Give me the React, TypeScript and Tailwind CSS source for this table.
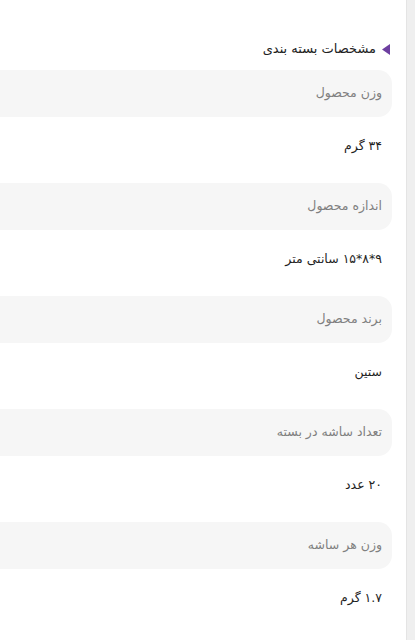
import React from 'react';

const specs = [
  { label: 'وزن محصول', value: '۳۴ گرم' },
  { label: 'اندازه محصول', value: '۹*۸*۱۵ سانتی متر' },
  { label: 'برند محصول', value: 'ستین' },
  { label: 'تعداد ساشه در بسته', value: '۲۰ عدد' },
  { label: 'وزن هر ساشه', value: '۱.۷ گرم' },
];

export default function App() {
  return (
    <div className="flex h-[640px] w-[415px] overflow-hidden bg-white font-['DejaVu_Sans',sans-serif]">
      <div dir="rtl" className="flex flex-1 flex-col pr-[14px]">
        <div className="flex h-[70px] items-center gap-[6px] pr-[2px] pt-[36px] pb-[8px]">
          <svg width="8" height="11" viewBox="0 0 8 11">
            <polygon points="8,0 8,11 0,5.5" fill="#6d3fa0" />
          </svg>
          <h3 className="text-[13px] text-[#222]">مشخصات بسته بندی</h3>
        </div>
        {specs.map((s) => (
          <div key={s.label} className="flex flex-col">
            <div className="flex h-[47px] items-center rounded-r-[14px] bg-[#f6f6f6] pr-[10px] text-[12.5px] text-[#808080]">
              {s.label}
            </div>
            <div className="flex h-[66px] items-start pr-[10px] pt-[20px] text-[12.5px] text-[#1f1f1f]">
              {s.value}
            </div>
          </div>
        ))}
      </div>
      <div className="w-[9px] border-l border-[#e4e4e4] bg-[#efefef]" />
    </div>
  );
}
